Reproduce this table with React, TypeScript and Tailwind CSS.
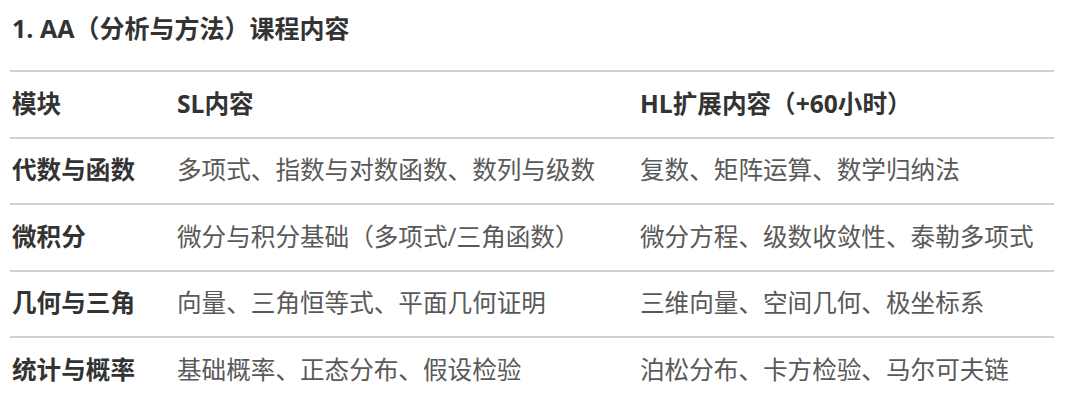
const rows = [
  ["代数与函数", "多项式、指数与对数函数、数列与级数", "复数、矩阵运算、数学归纳法"],
  ["微积分", "微分与积分基础（多项式/三角函数）", "微分方程、级数收敛性、泰勒多项式"],
  ["几何与三角", "向量、三角恒等式、平面几何证明", "三维向量、空间几何、极坐标系"],
  ["统计与概率", "基础概率、正态分布、假设检验", "泊松分布、卡方检验、马尔可夫链"],
]

export default function App() {
  return (
    <div
      className="w-[1080px] h-[402px] overflow-hidden bg-white px-[10px]"
      style={{ fontFamily: '"Open Sans", "Noto Sans CJK SC", sans-serif' }}
    >
      <div className="h-[70px] flex items-center pl-[2px] pb-[14px]">
        <h1 className="text-[25px] font-bold text-[#333333] leading-none">1. AA（分析与方法）课程内容</h1>
      </div>
      <div className="w-[1044px]">
        <div className="flex items-center h-[66.5px] border-t-2 border-[#d2d2d2] text-[24.6px] font-bold text-[#333333]">
          <div className="w-[167px] pl-[2px]">模块</div>
          <div className="w-[463px]">SL内容</div>
          <div className="flex-1">HL扩展内容（+60小时）</div>
        </div>
        {rows.map((r) => (
          <div key={r[0]} className="flex items-center h-[66.5px] border-t-2 border-[#d2d2d2] text-[24.6px]">
            <div className="w-[167px] pl-[2px] font-bold text-[#333333]">{r[0]}</div>
            <div className="w-[463px] text-[#595959]">{r[1]}</div>
            <div className="flex-1 text-[#595959]">{r[2]}</div>
          </div>
        ))}
      </div>
    </div>
  )
}
